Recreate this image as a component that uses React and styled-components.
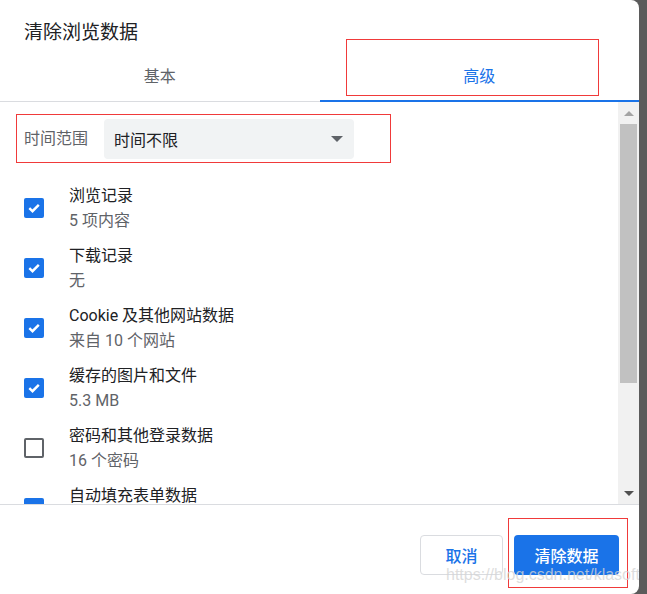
import React from "react";
import styled, { createGlobalStyle, css } from "styled-components";

const Global = createGlobalStyle`
  html, body { margin: 0; padding: 0; background: #5b5b5b; }
  body { font-family: Roboto, "Noto Sans CJK SC", sans-serif; }
  * { box-sizing: border-box; }
`;

const Dialog = styled.div`
  position: relative;
  width: 639px;
  height: 594px;
  background: #fff;
  border-radius: 0 8px 8px 0;
  display: flex;
  flex-direction: column;
  overflow: hidden;
`;

const Title = styled.h1`
  margin: 0;
  height: 46px;
  padding: 20px 24px 0;
  font-size: 19px;
  font-weight: 400;
  line-height: 26px;
  color: #202124;
`;

const TabBar = styled.div`
  display: flex;
  height: 56px;
  border-bottom: 1px solid #dadce0;
`;

const Tab = styled.div`
  position: relative;
  flex: 1;
  display: flex;
  align-items: flex-end;
  justify-content: center;
  padding-bottom: 13px;
  font-size: 16px;
  line-height: 22px;
  color: ${(p) => (p.$active ? "#1a73e8" : "#5f6368")};
  ${(p) =>
    p.$active &&
    css`
      &::after {
        content: "";
        position: absolute;
        left: 0;
        right: 0;
        bottom: -1px;
        height: 2px;
        background: #1a73e8;
      }
    `}
`;

const Annotation = styled.span`
  position: absolute;
  top: ${(p) => p.$t}px;
  right: ${(p) => p.$r}px;
  bottom: ${(p) => p.$b}px;
  left: ${(p) => p.$l}px;
  border: 1px solid #f03a3a;
  pointer-events: none;
`;

const Body = styled.div`
  flex: 1;
  min-height: 0;
  display: flex;
`;

const Scroll = styled.div`
  flex: 1;
  overflow: hidden;
  padding-top: 12px;
`;

const RangeRow = styled.div`
  display: flex;
  align-items: center;
  margin-left: 16px;
  width: 375px;
  height: 49px;
  padding-left: 7px;
  border: 1px solid #f03a3a;
`;

const RangeLabel = styled.span`
  width: 80px;
  font-size: 16px;
  line-height: 22px;
  color: #5f6368;
`;

const Select = styled.div`
  width: 250px;
  height: 40px;
  border-radius: 4px;
  background: #f1f3f4;
  display: flex;
  align-items: center;
  justify-content: space-between;
  padding: 0 11px 0 10px;
  font-size: 16px;
  color: #202124;
`;

const Caret = styled.span`
  width: 0;
  height: 0;
  border-left: 6px solid transparent;
  border-right: 6px solid transparent;
  border-top: 6px solid #5f6368;
`;

const List = styled.div`
  margin-top: 15px;
`;

const Row = styled.div`
  height: 60px;
  display: flex;
  align-items: center;
  gap: 25px;
  padding-left: 24px;
`;

const Box = styled.span`
  flex: none;
  width: 20px;
  height: 20px;
  border-radius: 2px;
  display: flex;
  align-items: center;
  justify-content: center;
  ${(p) =>
    p.$checked
      ? css`
          background: #1a73e8;
        `
      : css`
          border: 2px solid #5f6368;
        `}
`;

const Texts = styled.div`
  display: flex;
  flex-direction: column;
`;

const ItemTitle = styled.span`
  font-size: 16px;
  line-height: 25px;
  color: #202124;
`;

const ItemSub = styled.span`
  font-size: 16px;
  line-height: 25px;
  color: #5f6368;
`;

const Scrollbar = styled.div`
  width: 21px;
  background: #f1f1f1;
  display: flex;
  flex-direction: column;
  align-items: center;
`;

const ArrowBtn = styled.div`
  height: 22px;
  display: flex;
  align-items: center;
  justify-content: center;
`;

const Arrow = styled.span`
  width: 0;
  height: 0;
  border-left: 5px solid transparent;
  border-right: 5px solid transparent;
  ${(p) =>
    p.$up
      ? css`
          border-bottom: 5px solid #a3a3a3;
        `
      : css`
          border-top: 5px solid #505050;
        `}
`;

const Track = styled.div`
  flex: 1;
  width: 100%;
  display: flex;
  justify-content: center;
`;

const Thumb = styled.div`
  width: 17px;
  height: 259px;
  background: #c1c1c1;
`;

const Footer = styled.div`
  height: 90px;
  border-top: 1px solid #dadce0;
  display: flex;
  justify-content: flex-end;
  align-items: flex-start;
  gap: 11px;
  padding: 30px 20px 0;
`;

const Button = styled.button`
  position: relative;
  height: 40px;
  width: ${(p) => p.$w}px;
  border-radius: 4px;
  font-family: Roboto, "Noto Sans CJK SC", sans-serif;
  font-size: 16px;
  font-weight: 500;
  cursor: pointer;
  ${(p) =>
    p.$primary
      ? css`
          background: #1a73e8;
          color: #fff;
          border: none;
        `
      : css`
          background: #fff;
          color: #1a73e8;
          border: 1px solid #dadce0;
        `}
`;

const Watermark = styled.span`
  position: absolute;
  left: 446px;
  top: 567px;
  font-family: "Liberation Sans", Arial, sans-serif;
  font-size: 16px;
  line-height: 16px;
  color: rgba(212, 212, 212, 0.78);
  pointer-events: none;
  white-space: nowrap;
`;

const items = [
  { title: "浏览记录", sub: "5 项内容", checked: true },
  { title: "下载记录", sub: "无", checked: true },
  { title: "Cookie 及其他网站数据", sub: "来自 10 个网站", checked: true },
  { title: "缓存的图片和文件", sub: "5.3 MB", checked: true },
  { title: "密码和其他登录数据", sub: "16 个密码", checked: false },
  { title: "自动填充表单数据", sub: "", checked: true },
];

const Check = () => (
  <svg width="14" height="14" viewBox="0 0 14 14">
    <path d="M2.3 7.2 L5.5 10.2 L11.8 3.8" fill="none" stroke="#fff" strokeWidth="2.4" />
  </svg>
);

export default function App() {
  return (
    <>
      <Global />
      <Dialog>
        <Title>清除浏览数据</Title>
        <TabBar>
          <Tab>基本</Tab>
          <Tab $active>
            高级
            <Annotation $t={-7} $r={40} $b={5} $l={26} />
          </Tab>
        </TabBar>
        <Body>
          <Scroll>
            <RangeRow>
              <RangeLabel>时间范围</RangeLabel>
              <Select>
                <span>时间不限</span>
                <Caret />
              </Select>
            </RangeRow>
            <List>
              {items.map((it) => (
                <Row key={it.title}>
                  <Box $checked={it.checked}>{it.checked && <Check />}</Box>
                  <Texts>
                    <ItemTitle>{it.title}</ItemTitle>
                    <ItemSub>{it.sub || "\u00a0"}</ItemSub>
                  </Texts>
                </Row>
              ))}
            </List>
          </Scroll>
          <Scrollbar>
            <ArrowBtn>
              <Arrow $up />
            </ArrowBtn>
            <Track>
              <Thumb />
            </Track>
            <ArrowBtn>
              <Arrow />
            </ArrowBtn>
          </Scrollbar>
        </Body>
        <Footer>
          <Button $w={83}>取消</Button>
          <Button $w={105} $primary>
            清除数据
            <Annotation $t={-17} $r={-9} $b={-13} $l={-6} />
          </Button>
        </Footer>
        <Watermark>https://blog.csdn.net/klasoft</Watermark>
      </Dialog>
    </>
  );
}
